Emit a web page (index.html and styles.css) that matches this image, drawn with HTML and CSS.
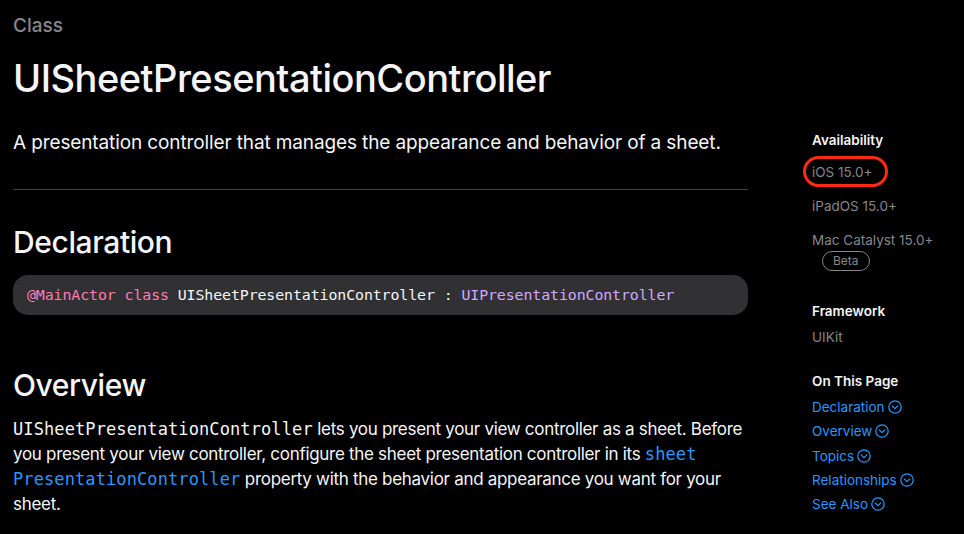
FILE: index.html
```html
<!DOCTYPE html>
<html lang="en">
<head>
<meta charset="utf-8">
<title>UISheetPresentationController</title>
<link rel="stylesheet" href="styles.css">
</head>
<body>
<div class="page">
  <main class="main">
    <div class="eyebrow">Class</div>
    <h1 class="title">UISheetPresentationController</h1>
    <p class="abstract">A presentation controller that manages the appearance and behavior of a sheet.</p>
    <hr class="divider">
    <h2 class="heading">Declaration</h2>
    <pre class="code"><span class="kw">@MainActor</span> <span class="kw">class</span> UISheetPresentationController : <span class="type">UIPresentationController</span></pre>
    <h2 class="heading heading-overview">Overview</h2>
    <p class="body"><code class="mono">UISheetPresentationController</code> lets you present your view controller as a sheet. Before you present your view controller, configure the sheet presentation controller in its <a class="mono link" href="#">sheet</a> <a class="mono link" href="#">PresentationController</a> property with the behavior and appearance you want for your sheet.</p>
  </main>
  <aside class="side">
    <div class="side-group">
      <div class="side-title">Availability</div>
      <div class="side-item side-ios">iOS 15.0+<span class="mark"></span></div>
      <div class="side-item">iPadOS 15.0+</div>
      <div class="side-item side-mac">Mac Catalyst 15.0+</div>
      <div class="beta-row"><span class="beta">Beta</span></div>
    </div>
    <div class="side-group side-framework">
      <div class="side-title">Framework</div>
      <div class="side-item side-tight">UIKit</div>
    </div>
    <div class="side-group side-page">
      <div class="side-title">On This Page</div>
      <ul class="toc">
        <li><a href="#">Declaration</a><svg class="chev" viewBox="0 0 14 14"><circle cx="7" cy="7" r="6.2"/><path d="M4.2 5.8 L7 8.6 L9.8 5.8"/></svg></li>
        <li><a href="#">Overview</a><svg class="chev" viewBox="0 0 14 14"><circle cx="7" cy="7" r="6.2"/><path d="M4.2 5.8 L7 8.6 L9.8 5.8"/></svg></li>
        <li><a href="#">Topics</a><svg class="chev" viewBox="0 0 14 14"><circle cx="7" cy="7" r="6.2"/><path d="M4.2 5.8 L7 8.6 L9.8 5.8"/></svg></li>
        <li><a href="#">Relationships</a><svg class="chev" viewBox="0 0 14 14"><circle cx="7" cy="7" r="6.2"/><path d="M4.2 5.8 L7 8.6 L9.8 5.8"/></svg></li>
        <li><a href="#">See Also</a><svg class="chev" viewBox="0 0 14 14"><circle cx="7" cy="7" r="6.2"/><path d="M4.2 5.8 L7 8.6 L9.8 5.8"/></svg></li>
      </ul>
    </div>
  </aside>
</div>
</body>
</html>
```

FILE: styles.css
```css
* { box-sizing: border-box; }
html, body { margin: 0; padding: 0; background: #000; }
body {
  font-family: Inter, "Liberation Sans", sans-serif;
  color: #f5f5f7;
  width: 964px;
  height: 534px;
  overflow: hidden;
}
.page {
  display: flex;
  gap: 64px;
  padding-left: 13px;
}
.main { width: 735px; flex: none; }
.eyebrow {
  margin-top: 14px;
  font-size: 19px;
  line-height: 24px;
  font-weight: 500;
  color: #86868b;
}
.title {
  margin: 16px 0 0;
  font-size: 38px;
  line-height: 48px;
  font-weight: 500;
  letter-spacing: -0.5px;
}
.abstract {
  margin: 27px 0 0;
  font-size: 19px;
  line-height: 28px;
  letter-spacing: -0.12px;
}
.divider {
  margin: 32px 0 0;
  border: 0;
  border-top: 1px solid #424245;
}
.heading {
  margin: 34px 0 0;
  font-size: 30px;
  line-height: 36px;
  font-weight: 500;
  letter-spacing: -0.4px;
}
.code {
  margin: 15px 0 0;
  height: 40px;
  background: #313133;
  border-radius: 15px;
  padding: 0 14px;
  font-family: "DejaVu Sans Mono", "Liberation Mono", monospace;
  font-size: 14.9px;
  line-height: 40px;
  color: #f5f5f7;
  letter-spacing: -0.1px;
}
.kw { color: #ff7ab2; }
.type { color: #d0a8ff; }
.heading-overview { margin-top: 52px; }
.body {
  margin: 14px 0 0;
  font-size: 17px;
  line-height: 25px;
  letter-spacing: -0.3px;
}
.mono {
  font-family: "DejaVu Sans Mono", "Liberation Mono", monospace;
  font-size: 17px;
  line-height: 20px;
  letter-spacing: 0.1px;
}
.link { color: #2997ff; text-decoration: none; }
.side {
  width: 150px;
  padding-top: 130px;
  font-size: 13.5px;
  line-height: 20px;
}
.side-framework { margin-top: 30px; }
.side-page { margin-top: 24px; }
.side-title { font-weight: 600; color: #f5f5f7; }
.side-item { color: #86868b; margin-top: 14px; }
.side-item.side-tight { margin-top: 6px; }
.side-ios { position: relative; margin-top: 12px; display: inline-block; }
.mark {
  position: absolute;
  left: -9px;
  right: -16px;
  top: -6px;
  bottom: -5px;
  border: 3px solid #ff2a14;
  border-radius: 16px;
}
.beta-row { margin-top: 0; padding-left: 10px; }
.beta {
  display: inline-block;
  border: 1px solid #86868b;
  color: #86868b;
  border-radius: 10px;
  font-size: 12px;
  line-height: 18px;
  padding: 0 10px;
}
.toc { list-style: none; margin: 4px 0 0; padding: 0; }
.toc li { display: flex; align-items: center; gap: 3px; height: 24.25px; }
.toc a { color: #2997ff; text-decoration: none; }
.chev { width: 14px; height: 14px; fill: none; stroke: #2997ff; stroke-width: 1.2; stroke-linecap: round; stroke-linejoin: round; }
```
